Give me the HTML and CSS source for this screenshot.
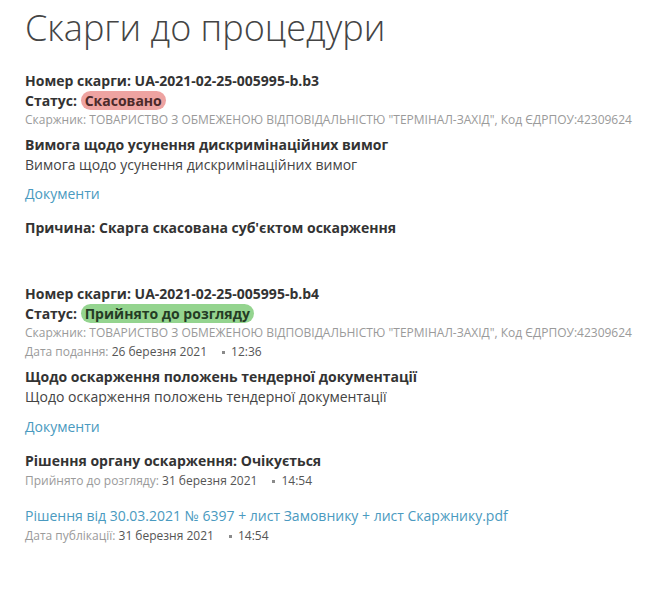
FILE: index.html
```html
<!DOCTYPE html>
<html lang="uk">
<head>
<meta charset="utf-8">
<title>Скарги до процедури</title>
<link rel="stylesheet" href="styles.css">
</head>
<body>
<div class="page">
  <h1 class="title">Скарги до процедури</h1>

  <section class="complaint first">
    <div class="strong">Номер скарги: UA-2021-02-25-005995-b.b3</div>
    <div class="strong status">Статус: <span class="badge badge-red">Скасовано</span></div>
    <div class="meta">Скаржник: ТОВАРИСТВО З ОБМЕЖЕНОЮ ВІДПОВІДАЛЬНІСТЮ "ТЕРМІНАЛ-ЗАХІД", Код ЄДРПОУ:42309624</div>
    <div class="strong subject">Вимога щодо усунення дискримінаційних вимог</div>
    <div class="text">Вимога щодо усунення дискримінаційних вимог</div>
    <a class="link docs" href="#">Документи</a>
    <div class="strong reason">Причина: Скарга скасована суб'єктом оскарження</div>
  </section>

  <section class="complaint second">
    <div class="strong">Номер скарги: UA-2021-02-25-005995-b.b4</div>
    <div class="strong status">Статус: <span class="badge badge-green">Прийнято до розгляду</span></div>
    <div class="meta">Скаржник: ТОВАРИСТВО З ОБМЕЖЕНОЮ ВІДПОВІДАЛЬНІСТЮ "ТЕРМІНАЛ-ЗАХІД", Код ЄДРПОУ:42309624</div>
    <div class="meta date">Дата подання: <span class="val">26 березня 2021</span><span class="dot"></span><span class="val">12:36</span></div>
    <div class="strong subject">Щодо оскарження положень тендерної документації</div>
    <div class="text">Щодо оскарження положень тендерної документації</div>
    <a class="link docs" href="#">Документи</a>
    <div class="strong reason">Рішення органу оскарження: Очікується</div>
    <div class="meta date">Прийнято до розгляду: <span class="val">31 березня 2021</span><span class="dot"></span><span class="val">14:54</span></div>
    <a class="link file" href="#">Рішення від 30.03.2021 № 6397 + лист Замовнику + лист Скаржнику.pdf</a>
    <div class="meta date">Дата публікації: <span class="val">31 березня 2021</span><span class="dot"></span><span class="val">14:54</span></div>
  </section>
</div>
</body>
</html>
```

FILE: styles.css
```css
html, body {
  margin: 0;
  padding: 0;
  background: #ffffff;
}
body {
  font-family: "Open Sans", "Noto Sans", sans-serif;
  color: #333333;
}
.page {
  padding: 0 0 0 25px;
}
.title {
  margin: 0;
  padding-top: 6px;
  font-size: 36px;
  font-weight: 300;
  line-height: 44px;
  color: #444444;
}
.complaint {
  display: flex;
  flex-direction: column;
  align-items: flex-start;
}
.first {
  margin-top: 21px;
}
.second {
  margin-top: 46px;
}
.strong {
  font-size: 14px;
  font-weight: 700;
  line-height: 20px;
  color: #333333;
}
.badge {
  display: inline-block;
  padding: 0 4px;
  border-radius: 10px;
  line-height: 19px;
}
.badge-red {
  background: #eea3a1;
  color: #4b2a2a;
}
.badge-green {
  background: #94d48f;
  color: #243b24;
}
.meta {
  font-size: 12px;
  line-height: 18px;
  color: #9a9a9a;
}
.meta .val {
  color: #555555;
}
.dot {
  display: inline-block;
  width: 3px;
  height: 3px;
  background: #8a8a8a;
  margin: 0 6px 0 15px;
  vertical-align: middle;
}
.subject {
  margin-top: 6px;
}
.text {
  font-size: 14px;
  line-height: 20px;
  color: #444444;
}
.link {
  color: #4a9ac0;
  text-decoration: none;
  font-size: 14px;
  line-height: 20px;
}
.docs {
  margin-top: 9px;
}
.second .docs {
  margin-top: 10px;
}
.reason {
  margin-top: 14px;
}
.file {
  margin-top: 16px;
}
.date {
  margin-top: 1px;
}
```
